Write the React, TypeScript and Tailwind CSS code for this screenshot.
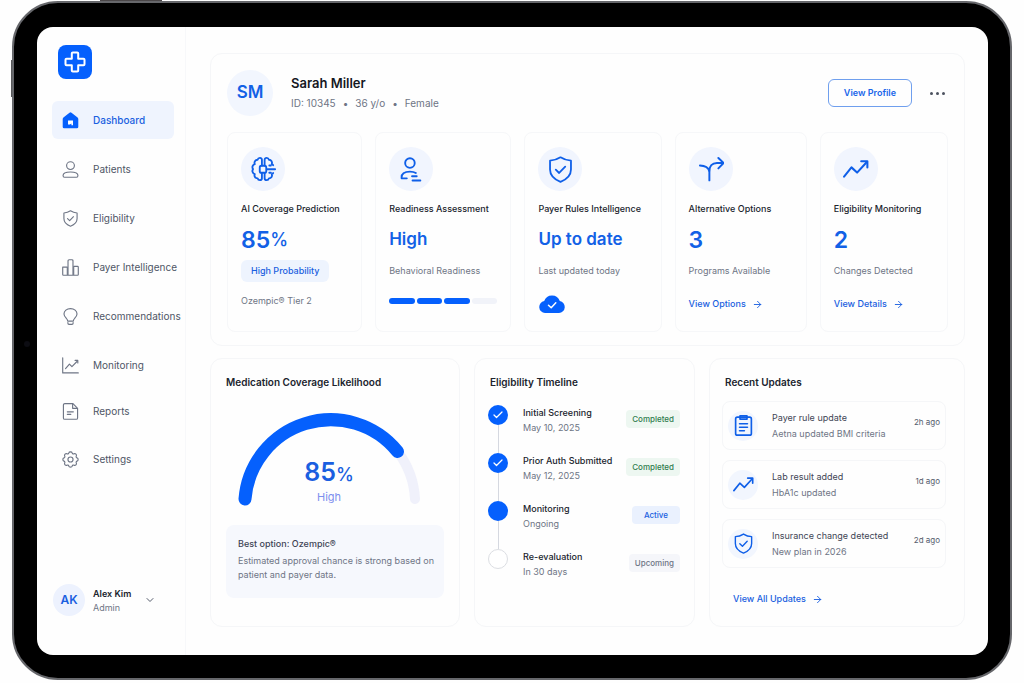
import type { ReactNode } from "react";
import { ArrowRight, Check, ChevronDown } from "lucide-react";
import { clsx } from "clsx";

type IconProps = { className?: string };

function Svg({ className, children, width = 1.6 }: IconProps & { children: ReactNode; width?: number }) {
  return (
    <svg
      viewBox="0 0 24 24"
      className={className}
      fill="none"
      stroke="currentColor"
      strokeWidth={width}
      strokeLinecap="round"
      strokeLinejoin="round"
      aria-hidden="true"
    >
      {children}
    </svg>
  );
}

function HomeIcon({ className }: IconProps) {
  return (
    <svg viewBox="0 0 24 24" className={className} aria-hidden="true">
      <path
        fill="currentColor"
        d="M10.6 1.1a2.2 2.2 0 0 1 2.8 0l8.6 6.7c.6.5 1 1.2 1 2V21a2 2 0 0 1-2 2H3a2 2 0 0 1-2-2V9.8c0-.8.4-1.5 1-2z"
      />
      <path fill="#fff" d="M8.5 12h7v6.800h-2.200v-2.400l-2.200 1.400H8.5z" />
    </svg>
  );
}

function UserIcon({ className }: IconProps) {
  return (
    <Svg className={className}>
      <circle cx="12" cy="6.5" r="5.5" />
      <path d="M1.500 20.500c0-3 4-5 10.500-5s10.500 2 10.500 5c0 1.400-.8 2.500-2 2.500h-17c-1.200 0-2-1.100-2-2.500z" />
    </Svg>
  );
}

function ShieldIcon({ className }: IconProps) {
  return (
    <Svg className={className}>
      <path d="M12 1.200c2.800 1.800 5.800 2.800 9.300 3V12c0 5.200-3.800 8.800-9.300 11C6.500 20.800 2.700 17.200 2.700 12V4.200c3.500-.2 6.500-1.200 9.300-3z" />
      <path d="m7.800 12.200 3 2.900 5.400-5.600" />
    </Svg>
  );
}

function BarsIcon({ className }: IconProps) {
  return (
    <Svg className={className}>
      <path d="M1 11.500h6.500v11.500H2a1 1 0 0 1-1-1z" />
      <path d="M8.500 23V2.500a1.500 1.500 0 0 1 1.500-1.500h4a1.500 1.500 0 0 1 1.500 1.500V23z" />
      <path d="M16.500 10.500h5.500a1 1 0 0 1 1 1V22a1 1 0 0 1-1 1h-5.500z" />
    </Svg>
  );
}

function BulbIcon({ className }: IconProps) {
  return (
    <Svg className={className}>
      <path d="M8 18.500c0-2-.8-3-2.200-4.300A8.500 8.500 0 0 1 2.800 8.500C2.800 4 6.800.8 12 .8s9.200 3.200 9.200 7.700a8.500 8.500 0 0 1-3 5.700C16.800 15.500 16 16.500 16 18.500z" />
      <path d="M8.300 20.500v1.200c0 .8.700 1.500 1.600 1.500h4.200c.9 0 1.600-.7 1.600-1.500v-1.200" />
    </Svg>
  );
}

function ChartIcon({ className }: IconProps) {
  return (
    <Svg className={className}>
      <path d="M1 1v21.500h22" />
      <path d="m5 16.500 5.500-6.500 3.500 3.500 7.500-7.500" />
      <path d="M18.500 4.800h3.800v3.700" />
    </Svg>
  );
}

function ReportIcon({ className }: IconProps) {
  return (
    <Svg className={className}>
      <path d="M4 .8h11.500l6.500 6.700V21a2 2 0 0 1-2 2H4a2 2 0 0 1-2-2V2.800a2 2 0 0 1 2-2z" />
      <path d="M15 1.500v6h6M7.500 12.500h8.500M7.500 16h5" />
    </Svg>
  );
}

function GearIcon({ className }: IconProps) {
  return (
    <Svg className={className}>
      <circle cx="12" cy="12" r="3.600" />
      <path d="M9.600 2.800c.5-2 4.300-2 4.800 0 .4 1.300 1.500 1.700 2.600 1.100 1.900-.9 4.200 1.400 3.200 3.200-.6 1.100-.2 2.200 1 2.600 2.100.6 2.100 4 0 4.600-1.200.4-1.600 1.500-1 2.600 1 1.800-1.300 4.100-3.200 3.200-1.100-.6-2.200-.2-2.600 1.100-.5 2-4.300 2-4.800 0-.4-1.300-1.500-1.700-2.600-1.100-1.900.9-4.200-1.400-3.200-3.200.6-1.100.2-2.200-1-2.600-2.100-.6-2.100-4 0-4.600 1.200-.4 1.600-1.500 1-2.600-1-1.800 1.300-4.100 3.200-3.200 1.100.6 2.200.2 2.600-1.100z" />
    </Svg>
  );
}

function BrainChipIcon({ className }: IconProps) {
  return (
    <Svg className={className} width={1.7}>
      <rect x="9" y="9" width="6" height="6.500" rx="1.500" />
      <path d="M11 8.800V3.500C10.800 1.200 7.600 1.200 7 3.500 4.800 3.500 3.600 5.500 4.400 7.500c-2 .6-2.800 2.900-1.600 4.600-1.200 1.700-.4 4 1.600 4.600-.8 2 .4 3.900 2.600 3.900.6 2.300 3.800 2.300 4 0v-4.900" />
      <path d="M13.500 8.800V3.500c.2-2.300 3.400-2.300 4 0 2.200 0 3.400 2 2.600 4 .6.200 1 .5 1.300 1M21.400 15.700c-.3.500-.7.800-1.300 1 .8 2-.4 3.900-2.600 3.900-.6 2.300-3.800 2.300-4 0v-4.900" />
      <path d="M15.500 12.200h7.700M17.800 8.800h1.500M17.800 15.500h1.500" />
    </Svg>
  );
}

function AssessmentIcon({ className }: IconProps) {
  return (
    <Svg className={className} width={1.8}>
      <circle cx="10.500" cy="5.800" r="4.600" />
      <path d="M7.500 20.500H2.500v-1c0-3.300 3-5.500 8-5.500 2.500 0 4.300.5 5.700 1.400" />
      <path d="M12.500 18.500h4.500M13 22.500h7.500" />
    </Svg>
  );
}

function BranchIcon({ className }: IconProps) {
  return (
    <Svg className={className} width={1.8}>
      <path d="M10.500 22.500v-8.500c0-4.500 2.500-7.500 7-7.500h6" />
      <path d="m18.800 1.800 4.900 4.700-4.900 4.900M1.800 8.800c4.200.2 7.500 1.300 8.600 5" />
    </Svg>
  );
}

function TrendIcon({ className }: IconProps) {
  return (
    <Svg className={className} width={1.9}>
      <path d="m1 19 6.800-8.500 5.200 4.800L22 5.500" />
      <path d="M16.800 4.800h5.700v5.700" />
    </Svg>
  );
}

function ClipboardIcon({ className }: IconProps) {
  return (
    <Svg className={className} width={1.9}>
      <rect x="3" y="2.500" width="18" height="20.500" rx="2" />
      <path d="M8 1h8v3.800H8zM7.500 10h9M7.500 14h9M7.500 18h5.500" />
    </Svg>
  );
}

function CloudIcon({ className }: IconProps) {
  return (
    <svg viewBox="0 0 26 18" className={className} aria-hidden="true">
      <path
        fill="currentColor"
        d="M6 18a6 6 0 0 1-.8-11.900A8.200 8.200 0 0 1 20.800 6.100 6 6 0 0 1 20 18z"
      />
      <path
        d="m9.500 10.200 2.700 2.600 4.600-5"
        fill="none"
        stroke="#fff"
        strokeWidth="1.5"
        strokeLinecap="round"
        strokeLinejoin="round"
      />
    </svg>
  );
}

const primaryNav = [
  { label: "Dashboard", icon: HomeIcon, active: true },
  { label: "Patients", icon: UserIcon },
  { label: "Eligibility", icon: ShieldIcon },
  { label: "Payer Intelligence", icon: BarsIcon },
  { label: "Recommendations", icon: BulbIcon },
  { label: "Monitoring", icon: ChartIcon },
];

const secondaryNav = [
  { label: "Reports", icon: ReportIcon },
  { label: "Settings", icon: GearIcon },
];

function NavItem({
  label,
  icon: Icon,
  active,
}: {
  label: string;
  icon: (props: IconProps) => ReactNode;
  active?: boolean;
}) {
  return (
    <li>
      <a
        href="#"
        aria-current={active ? "page" : undefined}
        className={clsx(
          "flex h-[38px] items-center gap-3.5 rounded-md px-2.5 text-[10px] whitespace-nowrap",
          active ? "bg-[#eff4fe] font-medium text-[#1a5fe0]" : "text-[#4f5666]",
        )}
      >
        <Icon className={clsx("size-[17px] shrink-0", active ? "text-[#0560fd]" : "text-[#6e7585]")} />
        {label}
      </a>
    </li>
  );
}

function Sidebar() {
  return (
    <aside className="flex w-[149px] shrink-0 flex-col border-r border-[#f7f8fa] pt-[18px] pr-[11px] pb-[39px] pl-[15px]">
      <a href="#" aria-label="Home" className="ml-1.5 flex size-[34px] items-center justify-center rounded-lg bg-[#0560fd] text-white">
        <Svg className="size-6" width={2}>
          <path d="M9.800 2.500h4.400a1 1 0 0 1 1 1v5.300h5.300a1 1 0 0 1 1 1v4.400a1 1 0 0 1-1 1h-5.300v5.300a1 1 0 0 1-1 1H9.800a1 1 0 0 1-1-1v-5.300H3.500a1 1 0 0 1-1-1V9.800a1 1 0 0 1 1-1h5.300V3.500a1 1 0 0 1 1-1z" />
        </Svg>
      </a>
      <nav className="mt-[22px] flex-1">
        <ul className="flex flex-col gap-[11px]">
          {primaryNav.map((item) => (
            <NavItem key={item.label} {...item} />
          ))}
        </ul>
        <ul className="mt-2 flex flex-col gap-2.5">
          {secondaryNav.map((item) => (
            <NavItem key={item.label} {...item} />
          ))}
        </ul>
      </nav>
      <button type="button" className="flex items-center text-left">
        <span className="ml-px flex size-8 items-center justify-center rounded-full bg-[#edf2fe] text-xs font-semibold text-[#1a5fe0]">
          AK
        </span>
        <span className="ml-2 flex-1 whitespace-nowrap">
          <span className="block text-[9px] leading-[15px] font-semibold text-[#20242d]">Alex Kim</span>
          <span className="block text-[9px] leading-3.5 text-[#6e7585]">Admin</span>
        </span>
        <ChevronDown className="mr-[18px] size-3 text-[#565d6d]" />
      </button>
    </aside>
  );
}

function StatCard({
  icon,
  title,
  value,
  children,
}: {
  icon: ReactNode;
  title: string;
  value: ReactNode;
  children: ReactNode;
}) {
  return (
    <article className="rounded-lg border border-[#f6f7f9] px-[13px] pt-3.5 pb-4 whitespace-nowrap">
      <div className="flex size-11 items-center justify-center rounded-full bg-[#f1f5fe] text-[#0f5fe8]">{icon}</div>
      <h2 className="mt-2.5 text-[9px] leading-4 font-medium text-[#20242d]">{title}</h2>
      <p className="mt-[9px] flex h-7 items-center font-semibold text-[#1261e6]">{value}</p>
      {children}
    </article>
  );
}

function Caption({ children }: { children: ReactNode }) {
  return <p className="mt-1.5 flex h-[22px] items-center text-[9px] text-[#6e7585]">{children}</p>;
}

function ArrowLink({ children, className }: { children: ReactNode; className?: string }) {
  return (
    <a href="#" className={clsx("flex h-[22px] items-center gap-1.5 text-[9px] font-medium text-[#1a5fe0]", className)}>
      {children}
      <ArrowRight className="size-[11px]" />
    </a>
  );
}

function PatientOverview() {
  return (
    <section className="rounded-xl border border-[#f5f6f8] px-4 pt-4 pb-[13px]">
      <header className="flex items-center">
        <div className="flex size-[46px] items-center justify-center rounded-full bg-[#f2f6fe] text-[17px] font-semibold text-[#1261e6]">
          SM
        </div>
        <div className="ml-[18px] flex-1 pb-0.5">
          <h1 className="text-[13px] leading-5 font-semibold text-[#15181f]">Sarah Miller</h1>
          <ul className="mt-0.5 flex gap-[7px] text-[10px] leading-4 text-[#6e7585]">
            <li>ID: 10345</li>
            <li aria-hidden="true">•</li>
            <li>36 y/o</li>
            <li aria-hidden="true">•</li>
            <li>Female</li>
          </ul>
        </div>
        <button
          type="button"
          className="h-7 rounded-md border border-[#6f9fee] px-[15px] text-[9px] font-semibold text-[#1a66ea]"
        >
          View Profile
        </button>
        <button type="button" aria-label="More options" className="mr-[3px] ml-[18px] flex gap-[3px]">
          <span className="size-[3px] rounded-full bg-[#4c525f]" />
          <span className="size-[3px] rounded-full bg-[#4c525f]" />
          <span className="size-[3px] rounded-full bg-[#4c525f]" />
        </button>
      </header>

      <div className="mt-4 grid grid-cols-[135fr_136fr_137fr_132fr_128fr] gap-[13px]">
        <StatCard
          icon={<BrainChipIcon className="size-[26px]" />}
          title="AI Coverage Prediction"
          value={
            <>
              <span className="text-[23px]">85</span>
              <span className="text-lg font-medium">%</span>
            </>
          }
        >
          <p className="mt-1.5 flex h-[22px] w-fit items-center rounded-md bg-[#eef4fe] px-2.5 text-[9px] font-medium text-[#1a5fe0]">
            High Probability
          </p>
          <p className="mt-[11px] text-[9px] leading-4 text-[#6e7585]">Ozempic® Tier 2</p>
        </StatCard>
        <StatCard
          icon={<AssessmentIcon className="size-[25px]" />}
          title="Readiness Assessment"
          value={<span className="text-[17px]">High</span>}
        >
          <Caption>Behavioral Readiness</Caption>
          <div role="img" aria-label="Readiness 3 of 4" className="mt-4 flex gap-0.5">
            <span className="h-1.5 flex-1 rounded-full bg-[#0560fd]" />
            <span className="h-1.5 flex-1 rounded-full bg-[#0560fd]" />
            <span className="h-1.5 flex-1 rounded-full bg-[#0560fd]" />
            <span className="h-1.5 flex-1 rounded-full bg-[#f1f3f9]" />
          </div>
        </StatCard>
        <StatCard
          icon={<ShieldIcon className="size-[27px]" />}
          title="Payer Rules Intelligence"
          value={<span className="text-[17px]">Up to date</span>}
        >
          <Caption>Last updated today</Caption>
          <CloudIcon className="mt-[13px] ml-px w-[26px] text-[#0560fd]" />
        </StatCard>
        <StatCard
          icon={<BranchIcon className="size-[26px]" />}
          title="Alternative Options"
          value={<span className="text-[23px]">3</span>}
        >
          <Caption>Programs Available</Caption>
          <ArrowLink className="mt-[11px]">View Options</ArrowLink>
        </StatCard>
        <StatCard
          icon={<TrendIcon className="size-[26px]" />}
          title="Eligibility Monitoring"
          value={<span className="text-[23px]">2</span>}
        >
          <Caption>Changes Detected</Caption>
          <ArrowLink className="mt-[11px]">View Details</ArrowLink>
        </StatCard>
      </div>
    </section>
  );
}

function Panel({ title, children }: { title: string; children: ReactNode }) {
  return (
    <section className="rounded-xl border border-[#f5f6f8] px-[15px] pt-[13px] pb-[15px]">
      <h2 className="text-[10px] leading-5 font-semibold text-[#20242d]">{title}</h2>
      {children}
    </section>
  );
}

function CoverageLikelihood() {
  return (
    <Panel title="Medication Coverage Likelihood">
      <div className="relative mt-[19px]">
        <svg viewBox="0 0 206 96" className="w-[206px] max-w-full" role="img" aria-label="Coverage likelihood 85%">
          <path
            d="M 172 41 A 86 86 0 0 1 189 88"
            fill="none"
            stroke="#f0f1fb"
            strokeWidth="10"
            strokeLinecap="round"
          />
          <path
            d="M 19 88 A 86 86 0 0 1 171.5 40.5"
            fill="none"
            stroke="#0560fd"
            strokeWidth="13"
            strokeLinecap="round"
          />
        </svg>
        <div className="absolute top-[47px] left-0 w-[206px] text-center">
          <p className="leading-7 font-semibold text-[#1a5fe0]">
            <span className="text-[25px]">85</span>
            <span className="text-lg font-medium">%</span>
          </p>
          <p className="text-[11px] leading-4 text-[#7d8fee]">High</p>
        </div>
      </div>
      <div className="mt-[18px] rounded-lg bg-[#f6f8fd] pt-[11px] pr-1 pb-4 pl-3">
        <h3 className="text-[9px] leading-4 font-medium text-[#3e4555]">Best option: Ozempic®</h3>
        <p className="mt-0.5 text-[9px] leading-3.5 text-[#6e7585]">
          Estimated approval chance is strong based on patient and payer data.
        </p>
      </div>
    </Panel>
  );
}

const timeline = [
  { title: "Initial Screening", note: "May 10, 2025", status: "Completed" },
  { title: "Prior Auth Submitted", note: "May 12, 2025", status: "Completed" },
  { title: "Monitoring", note: "Ongoing", status: "Active" },
  { title: "Re-evaluation", note: "In 30 days", status: "Upcoming" },
];

const statusStyles: Record<string, string> = {
  Completed: "bg-[#edf7f1] px-1.5 text-[#2f7d4f]",
  Active: "bg-[#eaf1fe] px-3 text-[#1a5fe0]",
  Upcoming: "bg-[#f5f6fa] px-1.5 text-[#6e7585]",
};

function EligibilityTimeline() {
  return (
    <Panel title="Eligibility Timeline">
      <ol className="mt-[13px] -mr-px">
        {timeline.map(({ title, note, status }, i) => (
          <li key={title} className={clsx("flex items-stretch", i < timeline.length - 1 && "h-12")}>
            <div className="-ml-[3px] flex w-[22px] flex-col items-center">
              <span
                className={clsx(
                  "flex size-5 shrink-0 items-center justify-center rounded-full text-white",
                  status === "Upcoming" ? "border border-[#dcdee3] bg-white" : "bg-[#0560fd]",
                )}
              >
                {status === "Completed" && <Check className="size-3" strokeWidth={2.5} />}
              </span>
              {i < timeline.length - 1 && <span className="w-px flex-1 bg-[#d5d8e0]" />}
            </div>
            <div className="ml-3.5 flex-1 whitespace-nowrap">
              <h3 className="text-[9px] leading-[15px] font-medium text-[#20242d]">{title}</h3>
              <p className="text-[9px] leading-[15px] text-[#6e7585]">{note}</p>
            </div>
            <span
              className={clsx(
                "mt-[5px] flex h-[18px] items-center self-start rounded text-[8px] font-medium",
                statusStyles[status],
              )}
            >
              {status}
            </span>
          </li>
        ))}
      </ol>
    </Panel>
  );
}

const updates = [
  { title: "Payer rule update", note: "Aetna updated BMI criteria", time: "2h ago", icon: ClipboardIcon },
  { title: "Lab result added", note: "HbA1c updated", time: "1d ago", icon: TrendIcon },
  { title: "Insurance change detected", note: "New plan in 2026", time: "2d ago", icon: ShieldIcon },
];

function RecentUpdates() {
  return (
    <Panel title="Recent Updates">
      <ul className="mt-[9px] mr-[3px] -ml-[3px] flex flex-col gap-2.5">
        {updates.map(({ title, note, time, icon: Icon }) => (
          <li key={title} className="flex h-[49px] items-center rounded-lg border border-[#f5f6f8] px-[5px]">
            <span className="flex size-[30px] shrink-0 items-center justify-center rounded-full bg-[#f2f6fe] text-[#0f5fe8]">
              <Icon className="size-[21px]" />
            </span>
            <div className="ml-3.5 flex-1 whitespace-nowrap">
              <h3 className="text-[9px] leading-4 text-[#3e4555]">{title}</h3>
              <p className="text-[9px] leading-4 text-[#6e7585]">{note}</p>
            </div>
            <time className="mb-2 text-[8px] leading-3 whitespace-nowrap text-[#565d6d]">{time}</time>
          </li>
        ))}
      </ul>
      <ArrowLink className="mt-5 ml-2 w-fit">View All Updates</ArrowLink>
    </Panel>
  );
}

export default function App() {
  return (
    <div className="relative flex min-h-screen bg-[#fefefe] px-3 pt-px pb-[3px] font-['Inter',sans-serif]">
      <span className="absolute top-0 left-[100px] h-0.5 w-[62px] bg-[#4a4648]" />
      <span className="absolute top-[60px] left-[11px] h-[37px] w-0.5 bg-[#58585b]" />
      <div className="relative flex flex-1 rounded-[46px] border-2 border-[#66676b] bg-black pt-6 pr-[22px] pb-[23px] pl-[23px]">
        <span className="absolute top-[338px] left-2.5 size-1.5 rounded-full bg-[#0c0c12]" />
        <div className="flex min-w-0 flex-1 rounded-2xl bg-[#fefefe]">
          <Sidebar />
          <main className="flex min-w-0 flex-1 flex-col gap-3 pt-[26px] pr-[23px] pb-7 pl-6">
            <PatientOverview />
            <div className="grid flex-1 grid-cols-[250fr_221fr_256fr] gap-3.5">
              <CoverageLikelihood />
              <EligibilityTimeline />
              <RecentUpdates />
            </div>
          </main>
        </div>
      </div>
    </div>
  );
}
